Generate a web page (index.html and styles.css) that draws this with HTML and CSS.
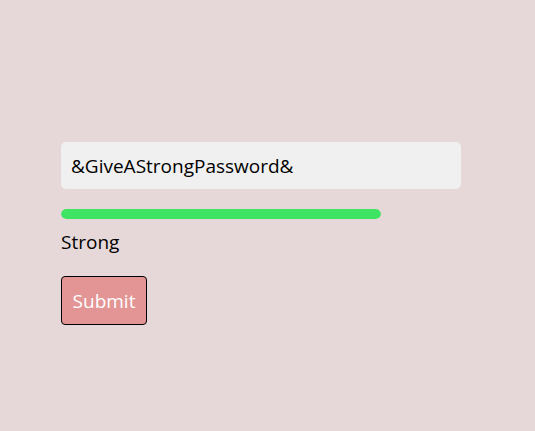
FILE: index.html
```html
<!DOCTYPE html>
<html>
<head>
<meta charset="utf-8">
<link rel="stylesheet" href="styles.css">
</head>
<body>
<div class="wrap">
  <div class="field"><input class="input" type="text" value="&amp;GiveAStrongPassword&amp;"></div>
  <div class="meter"><div class="meter-fill" style="width:100%"></div></div>
  <div class="label">Strong</div>
  <button class="submit">Submit</button>
</div>
</body>
</html>
```
FILE: styles.css
```css
html, body {
  margin: 0;
  padding: 0;
  background: #e6d8d8;
  font-family: "Open Sans", "Lato", sans-serif;
}
.wrap {
  padding: 142px 0 0 61px;
  display: flex;
  flex-direction: column;
  align-items: flex-start;
}
.input {
  display: block;
  box-sizing: border-box;
  width: 400px;
  height: 47px;
  border: none;
  outline: none;
  border-radius: 5px;
  background: #f0f0f0;
  padding: 0 10px;
  font-family: inherit;
  font-size: 19px;
  color: #000;
}
.meter {
  margin-top: 20px;
  width: 320px;
  height: 10px;
  border-radius: 5px;
  background: transparent;
  overflow: hidden;
}
.meter-fill {
  height: 100%;
  background: #3ee462;
  border-radius: 5px;
}
.label {
  margin-top: 10px;
  font-size: 19px;
  line-height: 26px;
  color: #000;
}
.submit {
  margin-top: 21px;
  box-sizing: border-box;
  width: 86px;
  height: 49px;
  border: 1px solid #000;
  border-radius: 4px;
  background: #e39494;
  color: #fff;
  font-family: inherit;
  font-size: 19px;
  padding: 0;
}
```
